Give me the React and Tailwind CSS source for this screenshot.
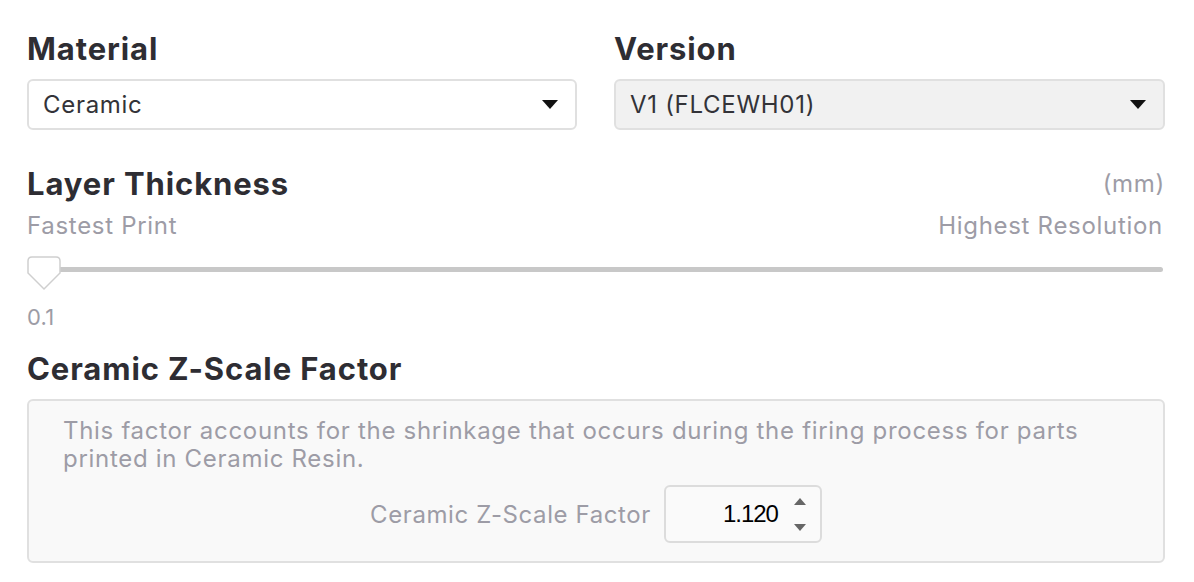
import React from "react";

const font = { fontFamily: "Inter, Lato, sans-serif" };

function Caret() {
  return (
    <svg width="16" height="9" viewBox="0 0 16 9" className="shrink-0">
      <path d="M0 0 H16 L8 9 Z" fill="#111" />
    </svg>
  );
}

function Select({ value, disabled }) {
  return (
    <div
      className={`flex h-[51px] items-center justify-between rounded-[6px] border-2 border-[#e0e0e0] pl-[14px] pr-[17px] ${
        disabled ? "bg-[#f1f1f1]" : "bg-white"
      }`}
    >
      <span className="text-[24px] leading-[29px] tracking-[0.7px] text-[#333338]">{value}</span>
      <Caret />
    </div>
  );
}

const h2 = "text-[31px] font-bold leading-[36px] tracking-[0.9px] text-[#2e2d33]";
const body = "text-[24px] leading-[29px] tracking-[0.7px] text-[#9d9ca6]";

export default function App() {
  return (
    <div className="w-[1194px] h-[582px] bg-white pl-[27px] pr-[29px] pt-[31px]" style={font}>
      <div className="grid grid-cols-[550px_1fr] gap-x-[37px]">
        <div>
          <h2 className={h2}>Material</h2>
          <div className="mt-[12px]">
            <Select value="Ceramic" />
          </div>
        </div>
        <div>
          <h2 className={h2}>Version</h2>
          <div className="mt-[12px]">
            <Select value="V1 (FLCEWH01)" disabled />
          </div>
        </div>
      </div>

      <div className="mt-[36px] flex items-start justify-between">
        <h2 className={h2}>Layer Thickness</h2>
        <span className={`${body} mt-[3px]`}>(mm)</span>
      </div>
      <div className={`mt-[9px] flex justify-between ${body}`}>
        <span>Fastest Print</span>
        <span className="pr-[2px]">Highest Resolution</span>
      </div>

      <div className="relative mt-[16px] h-[34px]">
        <div className="absolute left-[3px] right-[2px] top-[11px] h-[5px] rounded-full bg-[#c8c8c8]" />
        <svg className="absolute left-0 top-0" width="35" height="35" viewBox="0 0 35 35">
          <path
            d="M5 1 H29 Q33 1 33 5 V17 L17 33 L1 17 V5 Q1 1 5 1 Z"
            fill="#fff"
            stroke="#cfcfcf"
            strokeWidth="1.5"
          />
        </svg>
      </div>
      <div className="mt-[14px] text-[22px] leading-[26px] tracking-[0.3px] text-[#9d9ca6]">0.1</div>

      <h2 className={`mt-[21px] ${h2}`}>Ceramic Z-Scale Factor</h2>

      <div className="mt-[12px] rounded-[6px] border-2 border-[#e0e0e0] bg-[#f9f9f9] pb-[18px] pl-[34px] pr-[34px] pt-[16px]">
        <p className="max-w-[1050px] text-[24px] leading-[28px] tracking-[0.7px] text-[#9d9ca6]">
          This factor accounts for the shrinkage that occurs during the firing process for parts printed in
          Ceramic Resin.
        </p>
        <div className="mt-[12px] flex items-center justify-center gap-[13px]">
          <span className="text-[24px] leading-[29px] tracking-[0.6px] text-[#9d9ca6]">Ceramic Z-Scale Factor</span>
          <div className="flex h-[58px] w-[158px] items-center justify-end gap-[16px] rounded-[6px] border-2 border-[#dcdcdc] bg-[#fafafa] pr-[14px]">
            <span
              className="text-[24px] tracking-[-1px] text-black"
              style={{ fontFamily: "'Liberation Sans', Arial, sans-serif" }}
            >
              1.120
            </span>
            <div className="flex flex-col gap-[19px]">
              <svg width="12" height="7" viewBox="0 0 12 7">
                <path d="M6 0 L12 7 H0 Z" fill="#666" />
              </svg>
              <svg width="12" height="7" viewBox="0 0 12 7">
                <path d="M0 0 H12 L6 7 Z" fill="#666" />
              </svg>
            </div>
          </div>
        </div>
      </div>
    </div>
  );
}
